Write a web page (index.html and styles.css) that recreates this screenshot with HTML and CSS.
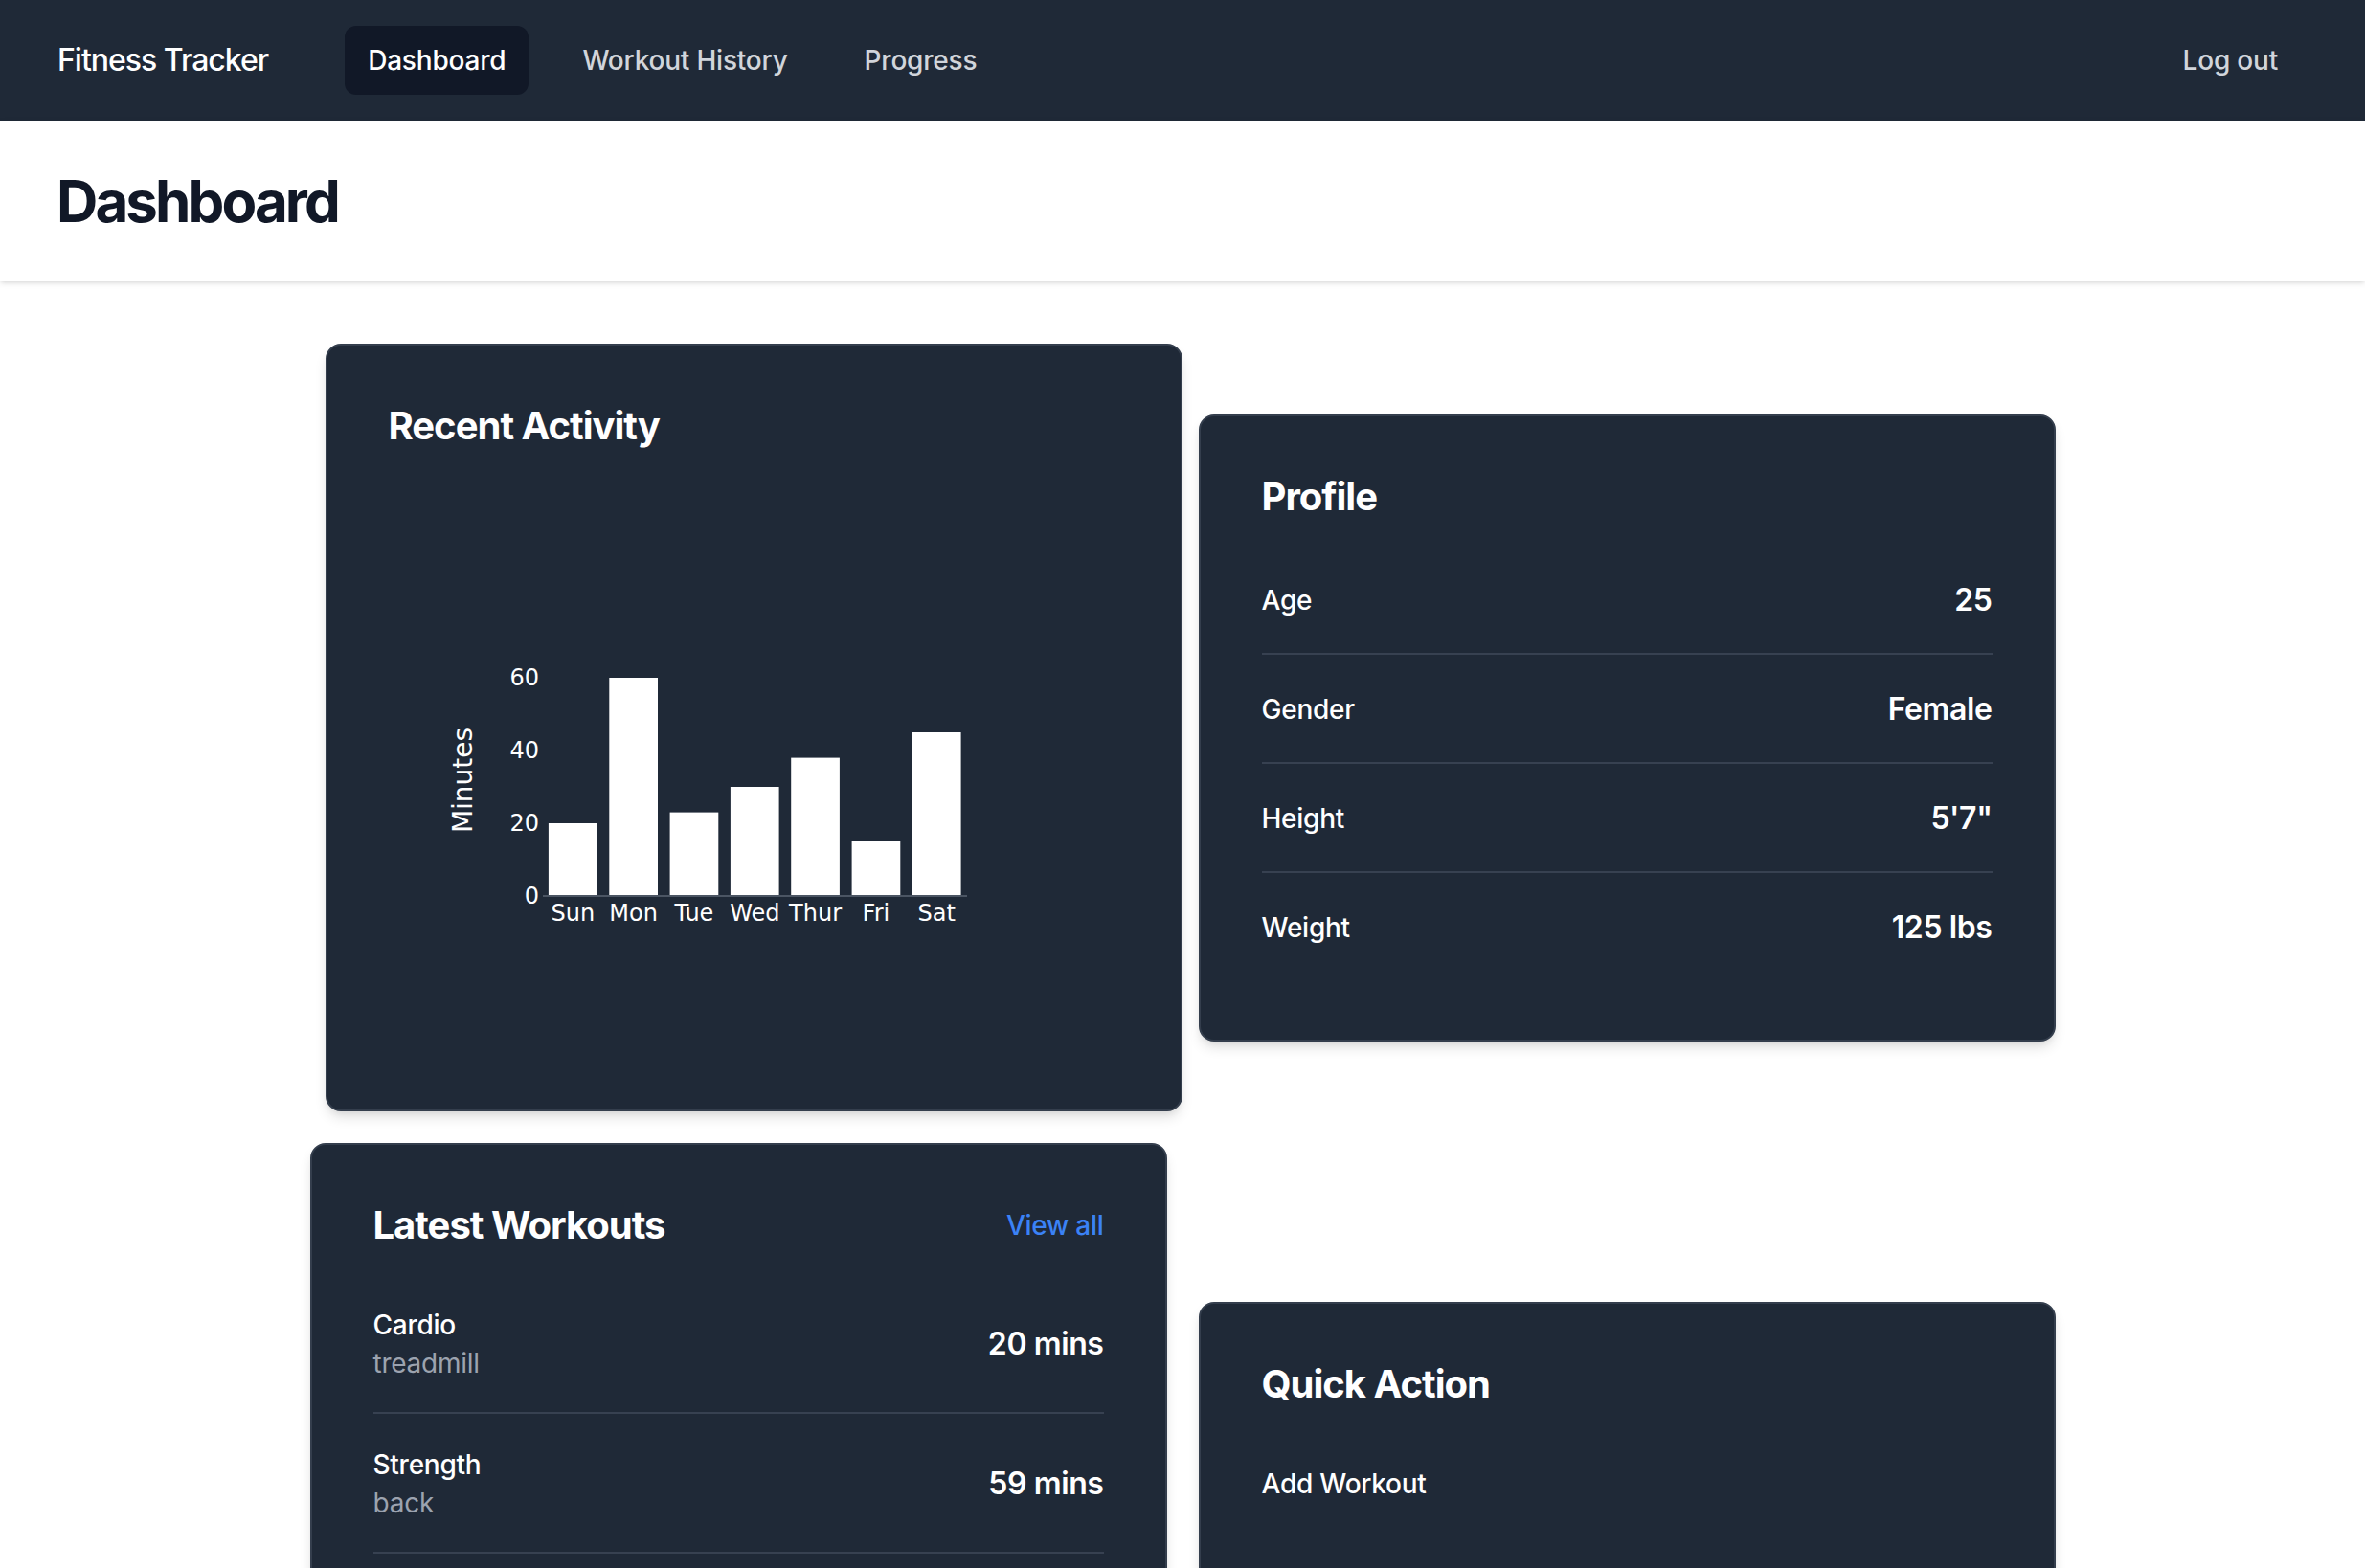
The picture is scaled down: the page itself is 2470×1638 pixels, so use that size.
FILE: index.html
```html
<!DOCTYPE html>
<html lang="en">
<head>
<meta charset="utf-8">
<title>Fitness Tracker</title>
<link rel="stylesheet" href="styles.css">
</head>
<body>
<nav class="nav">
  <div class="nav-left">
    <span class="brand">Fitness Tracker</span>
    <div class="nav-links">
      <a class="nav-link active" href="#">Dashboard</a>
      <a class="nav-link" href="#">Workout History</a>
      <a class="nav-link" href="#">Progress</a>
    </div>
  </div>
  <a class="nav-link" href="#">Log out</a>
</nav>
<header class="page-header">
  <h1>Dashboard</h1>
</header>
<main class="grid">
  <section class="card card-activity">
    <h2 class="card-title">Recent Activity</h2>
    <svg class="chart" width="763" height="601" viewBox="0 0 763 601">
      <g class="bars">
        <rect x="166.9" y="364" width="50.7" height="76"/>
        <rect x="230.3" y="212" width="50.7" height="228"/>
        <rect x="293.6" y="352.6" width="50.7" height="87.4"/>
        <rect x="356.9" y="326" width="50.7" height="114"/>
        <rect x="420.2" y="295.6" width="50.7" height="144.4"/>
        <rect x="483.6" y="383" width="50.7" height="57"/>
        <rect x="546.9" y="269" width="50.7" height="171"/>
      </g>
      <line class="axis" x1="161" y1="440" x2="604" y2="440"/>
      <g class="ticks" text-anchor="end">
        <text x="157" y="220">60</text>
        <text x="157" y="296">40</text>
        <text x="157" y="372">20</text>
        <text x="157" y="448">0</text>
      </g>
      <g class="ticks" text-anchor="middle">
        <text x="192.3" y="466">Sun</text>
        <text x="255.6" y="466">Mon</text>
        <text x="318.9" y="466">Tue</text>
        <text x="382.3" y="466">Wed</text>
        <text x="445.6" y="466">Thur</text>
        <text x="508.9" y="466">Fri</text>
        <text x="572.3" y="466">Sat</text>
      </g>
      <text class="axis-title" x="0" y="0" text-anchor="middle" transform="translate(87 319) rotate(-90)">Minutes</text>
    </svg>
  </section>

  <section class="card">
    <h2 class="card-title">Profile</h2>
    <div class="list">
      <div class="row"><span class="label">Age</span><span class="value">25</span></div>
      <div class="row"><span class="label">Gender</span><span class="value">Female</span></div>
      <div class="row"><span class="label">Height</span><span class="value">5'7"</span></div>
      <div class="row"><span class="label">Weight</span><span class="value">125 lbs</span></div>
    </div>
  </section>

  <section class="card">
    <div class="card-head">
      <h2 class="card-title">Latest Workouts</h2>
      <a class="link" href="#">View all</a>
    </div>
    <div class="list">
      <div class="row">
        <div class="workout"><span class="label">Cardio</span><span class="sub">treadmill</span></div>
        <span class="value">20 mins</span>
      </div>
      <div class="row">
        <div class="workout"><span class="label">Strength</span><span class="sub">back</span></div>
        <span class="value">59 mins</span>
      </div>
      <div class="row">
        <div class="workout"><span class="label">Cardio</span><span class="sub">running</span></div>
        <span class="value">30 mins</span>
      </div>
    </div>
  </section>

  <section class="card">
    <h2 class="card-title">Quick Action</h2>
    <div class="list">
      <div class="row"><span class="label">Add Workout</span></div>
    </div>
  </section>
</main>
</body>
</html>
```

FILE: styles.css
```css
* { box-sizing: border-box; }

html, body {
  margin: 0;
  padding: 0;
  background: #ffffff;
  font-family: "Inter", "Noto Sans", sans-serif;
  -webkit-font-smoothing: antialiased;
}

a { text-decoration: none; }

.nav {
  height: 126px;
  background: #1f2937;
  display: flex;
  align-items: center;
  justify-content: space-between;
  padding: 0 67px 0 60px;
}

.nav-left {
  display: flex;
  align-items: center;
}

.brand {
  color: #ffffff;
  font-size: 32px;
  line-height: 48px;
  font-weight: 500;
  letter-spacing: -1px;
}

.nav-links {
  display: flex;
  gap: 32px;
  margin-left: 80px;
}

.nav-link {
  display: block;
  padding: 16px 24px;
  font-size: 28px;
  line-height: 40px;
  font-weight: 500;
  color: #d1d5db;
  border-radius: 12px;
  letter-spacing: -0.2px;
}

.nav-link.active {
  background: #111827;
  color: #ffffff;
}

.page-header {
  background: #ffffff;
  padding: 48px 59px;
  box-shadow: 0 2px 6px rgba(0, 0, 0, 0.1), 0 2px 4px -2px rgba(0, 0, 0, 0.1);
  position: relative;
}

.page-header h1 {
  margin: 0;
  font-size: 60px;
  line-height: 72px;
  font-weight: 700;
  color: #111827;
  letter-spacing: -2.9px;
}

.grid {
  display: grid;
  grid-template-columns: 895px 895px;
  column-gap: 33px;
  row-gap: 33px;
  justify-content: center;
  align-items: center;
  padding: 65px 0 80px;
}

.card {
  background: #1f2937;
  border: 2px solid #343e4d;
  border-radius: 16px;
  padding: 56px 64px 62px;
  box-shadow: 0 8px 14px -2px rgba(0, 0, 0, 0.12), 0 4px 8px -4px rgba(0, 0, 0, 0.1);
  color: #ffffff;
}

.card-activity {
  margin-left: 16px;
  margin-right: -16px;
}

.card-title {
  margin: 0 0 23px;
  font-size: 40px;
  line-height: 56px;
  font-weight: 700;
  color: #ffffff;
  letter-spacing: -1px;
}

.card-head {
  display: flex;
  justify-content: space-between;
  align-items: center;
  margin-bottom: 23px;
}

.card-head .card-title {
  margin: 0;
}

.link {
  color: #3b82f6;
  font-size: 28px;
  line-height: 40px;
  font-weight: 500;
  letter-spacing: -0.25px;
}

.chart {
  display: block;
}

.chart .bars rect {
  fill: #ffffff;
}

.chart .axis {
  stroke: #4b5563;
  stroke-width: 2;
}

.chart text {
  font-family: "DejaVu Sans", Verdana, sans-serif;
  fill: #ffffff;
}

.chart .ticks text {
  font-size: 24px;
}

.chart .axis-title {
  font-size: 28px;
}

.list {
  display: flex;
  flex-direction: column;
}

.row {
  display: flex;
  justify-content: space-between;
  align-items: center;
  padding: 33px 0 31px;
  border-bottom: 2px solid #374151;
}

.row:last-child {
  border-bottom: none;
}

.label {
  font-size: 28px;
  line-height: 40px;
  font-weight: 500;
  color: #ffffff;
  letter-spacing: -0.25px;
}

.value {
  font-size: 32px;
  line-height: 48px;
  font-weight: 600;
  color: #ffffff;
  letter-spacing: -0.4px;
}

.workout {
  display: flex;
  flex-direction: column;
}

.sub {
  font-size: 28px;
  line-height: 40px;
  font-weight: 400;
  color: #9ca3af;
  letter-spacing: -0.25px;
}
```
